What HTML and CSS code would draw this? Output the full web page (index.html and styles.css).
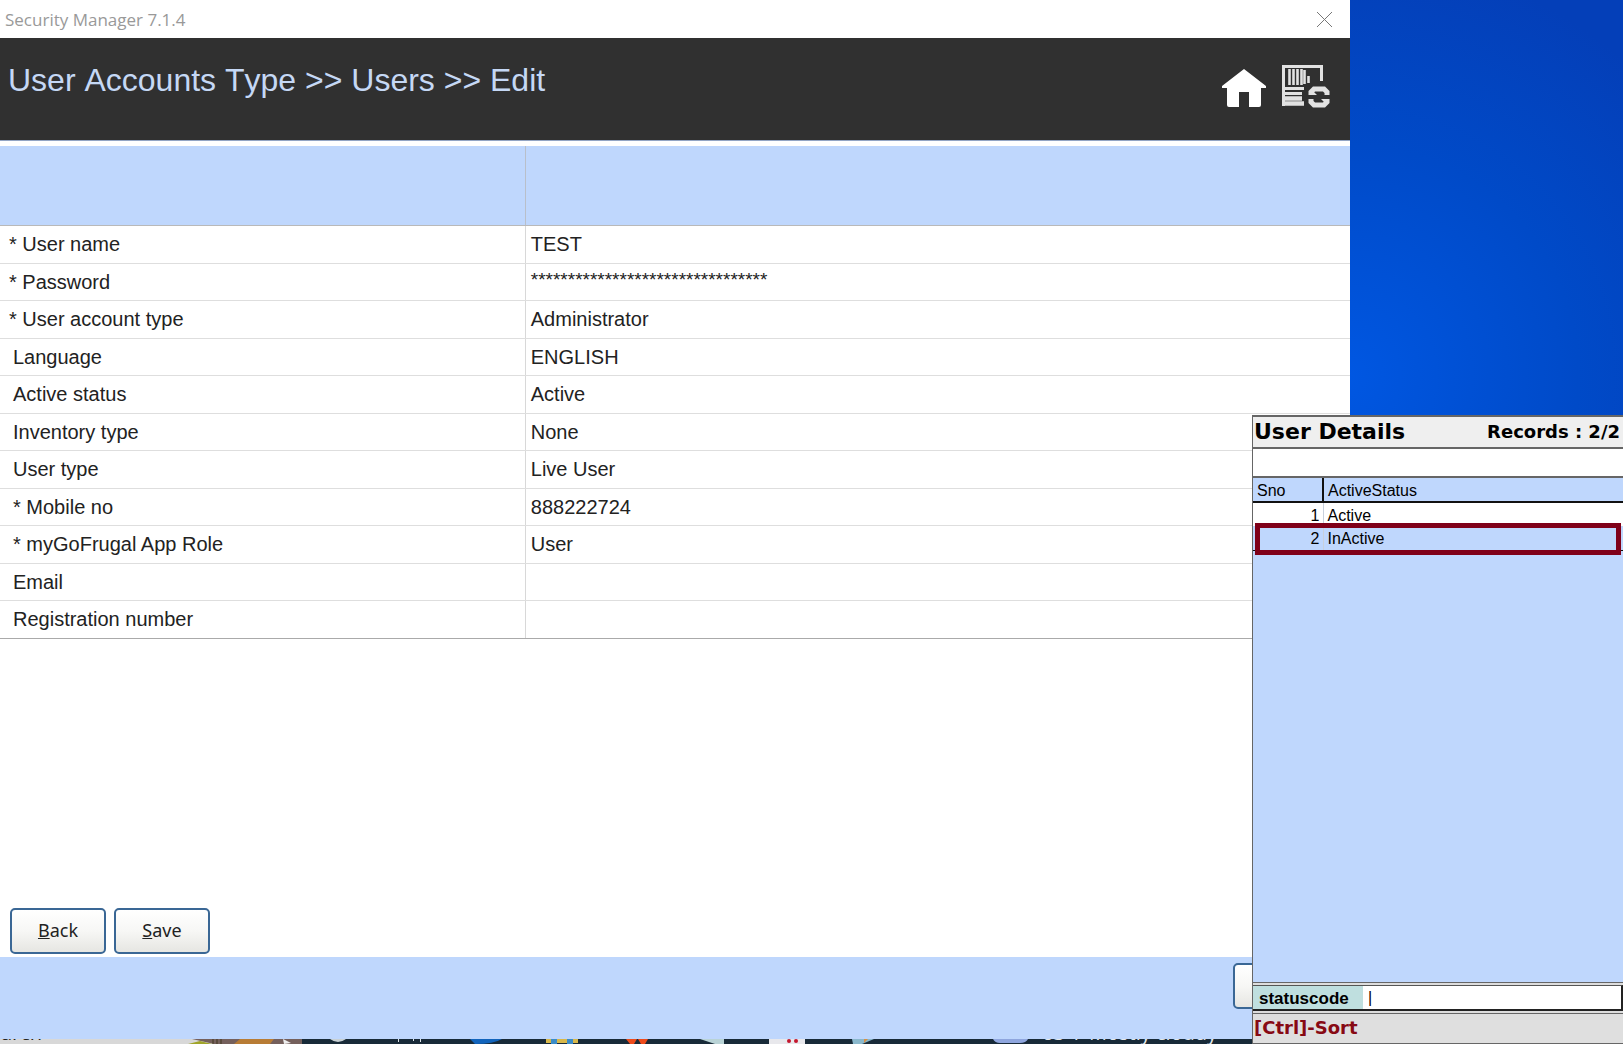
FILE: index.html
```html
<!DOCTYPE html>
<html lang="en">
<head>
<meta charset="utf-8">
<title>Security Manager 7.1.4</title>
<link rel="stylesheet" href="styles.css">
</head>
<body>
<main class="desktop">
  <section class="window">
    <div class="titlebar">
      <span>Security Manager 7.1.4</span>
      <button class="icon-button" type="button" aria-label="Close">
        <svg width="17" height="17" viewBox="0 0 17 17"><path d="M1 1 16 16M16 1 1 16" stroke="#777" fill="none"/></svg>
      </button>
    </div>
    <header class="banner">
      <h1 class="banner-title">User Accounts Type &gt;&gt; Users &gt;&gt; Edit</h1>
      <div class="banner-tools">
        <button class="icon-button" type="button" aria-label="Home">
          <svg width="46" height="44" viewBox="0 0 46 44"><path d="M23 5 45 22V24H40V41Q40 43 38 43H28V28H18V43H8Q6 43 6 41V24H1V22Z" fill="#fff"/></svg>
        </button>
        <button class="icon-button" type="button" aria-label="Refresh list">
          <svg width="48" height="43" viewBox="0 0 48 43" fill="none" stroke="#e2e2e2">
            <path d="M1.500 41V1.500H39.500V16" stroke-width="3"/>
            <path d="M7.500 4V20M11.500 4V20M15.500 4V20M19.500 4V20M22.500 5V19M26.500 11V18" stroke-width="2.600"/>
            <path d="M2 23.500H22M2 28.500H20" stroke-width="3"/>
            <path d="M2 33.500H20M2 38.500H22" stroke-width="4.600"/>
            <path d="M29 30V27L32 24H42L45 27V30M29 34V37L32 40H42L45 37V34" stroke-width="5"/>
            <path d="M27 30H35L30 25ZM47 34H39L44 39Z" fill="#e2e2e2" stroke="none"/>
          </svg>
        </button>
      </div>
    </header>
    <table class="grid">
      <thead><tr><td></td><td></td></tr></thead>
      <tbody>
        <tr><th scope="row" class="flush">* User name</th><td>TEST</td></tr>
        <tr><th scope="row" class="flush">* Password</th><td class="masked">********************************</td></tr>
        <tr><th scope="row" class="flush">* User account type</th><td>Administrator</td></tr>
        <tr><th scope="row">Language</th><td>ENGLISH</td></tr>
        <tr><th scope="row">Active status</th><td>Active</td></tr>
        <tr><th scope="row">Inventory type</th><td>None</td></tr>
        <tr><th scope="row">User type</th><td>Live User</td></tr>
        <tr><th scope="row">* Mobile no</th><td>888222724</td></tr>
        <tr><th scope="row">* myGoFrugal App Role</th><td>User</td></tr>
        <tr><th scope="row">Email</th><td></td></tr>
        <tr><th scope="row">Registration number</th><td></td></tr>
      </tbody>
    </table>
    <div class="actions">
      <button class="button" type="button"><u>B</u>ack</button>
      <button class="button" type="button"><u>S</u>ave</button>
    </div>
    <footer class="footer">
      <button class="button" type="button" aria-label="Close form"></button>
    </footer>
  </section>

  <div class="taskbar">
    <svg class="taskbar-art" width="1252" height="5" viewBox="0 0 1252 5">
      <path d="M0 0H302V5H0Z" fill="#d8d8d8"/>
      <path d="M192 0H302V5H214Z" fill="#75605c"/>
      <path d="M240 0H274L270 5H234Z" fill="#b87c35"/>
      <path d="M188 5 200 2 212 5Z" fill="#a0a428"/>
      <path d="M213 0V5M217 0V5M221 0V5" stroke="#41361f"/>
      <path d="M283 0 291 4 284 5Z" fill="#eee"/>
      <path d="M330 0Q338 6 346 0Z" fill="#c8d0d4"/>
      <path d="M398.500 0V3M413.500 0V2M420.500 0V3" stroke="#dde4e8"/>
      <path d="M470 0H502Q494 5 475 5Z" fill="#1264bc"/>
      <path d="M546 0H578V4H546Z" fill="#d9b84a"/>
      <path d="M551 0H557V5H551ZM567 0H573V5H567Z" fill="#3b8cc8"/>
      <path d="M626 0H637L634 5H630ZM638 0H648L645 5H641Z" fill="#ee4b1b"/>
      <path d="M700 0H724V5H715Z" fill="#b9d3d6"/>
      <path d="M769 0H805V5H769Z" fill="#e8e8ec"/>
      <circle cx="789" cy="2" r="2" fill="#c4162e"/><circle cx="796" cy="2" r="2" fill="#c4162e"/>
      <path d="M852 0H874L862 5H853Z" fill="#8ab8cc"/><path d="M864 0H868L864 4Z" fill="#d69045"/>
      <path d="M993 0H1028Q1026 4 1020 4H1000Q995 4 993 0Z" fill="#8fa6de"/>
    </svg>
    <span class="taskbar-search">arch</span>
    <span class="taskbar-weather">63°F Mostly cloudy</span>
  </div>

  <aside class="popup">
    <div class="popup-head">
      <h2 class="popup-title">User Details</h2>
      <span class="popup-count">Records : 2/2</span>
    </div>
    <input class="popup-filter" type="text" aria-label="Filter">
    <div class="popup-list">
      <table class="records">
        <thead><tr><th>Sno</th><th>ActiveStatus</th></tr></thead>
        <tbody>
          <tr><td>1</td><td>Active</td></tr>
          <tr class="selected"><td>2</td><td>InActive</td></tr>
        </tbody>
      </table>
      <div class="marker"></div>
    </div>
    <div class="status">
      <label class="status-label" for="status">statuscode</label>
      <input class="status-input" id="status" type="text" value="|">
    </div>
    <div class="hint">[Ctrl]-Sort</div>
  </aside>
</main>
</body>
</html>
```
FILE: styles.css
```css
* { box-sizing: border-box; }

body {
  margin: 0;
  font-family: "Liberation Sans", Arial, sans-serif;
  font-size: 20px;
  color: #222;
}

.desktop {
  position: relative;
  display: flex;
  flex-direction: column;
  min-height: 100vh;
  overflow: hidden;
  background: radial-gradient(ellipse 420px 420px at 83% 36%, #0057e2 0%, #004ac8 55%, #043fb8 100%);
}

.window {
  flex: 1;
  display: flex;
  flex-direction: column;
  width: 83.2%;
  background: #fff;
}

.icon-button {
  display: flex;
  padding: 0;
  border: 0;
  background: none;
}

.titlebar {
  display: flex;
  align-items: center;
  justify-content: space-between;
  height: 38px;
  padding: 0 17px 0 5px;
  font-family: "Open Sans", "Noto Sans", sans-serif;
  font-size: 17px;
  color: #999;
}

.banner {
  display: flex;
  justify-content: space-between;
  height: 103px;
  padding: 24px 20px 0 8px;
  border-bottom: 1px solid #93a5c4;
  background: #303030;
}

.banner-title {
  margin: 0;
  font-size: 32px;
  line-height: 36px;
  font-weight: 400;
  font-kerning: none;
  color: #c5d8f5;
}

.banner-tools {
  display: flex;
  align-items: center;
  gap: 15px;
  height: 48px;
}

.grid {
  width: 100%;
  margin-top: 5px;
  border-collapse: collapse;
  table-layout: fixed;
}

.grid thead td {
  height: 79px;
  background: #bfd7fd;
  border-bottom: 1px solid #b9b9b9;
}

.grid tr > :first-child {
  width: 38.9%;
  border-right: 1px solid #d8d8d8;
}

.grid thead tr > :first-child { border-right-color: #b9bfca; }

.grid tbody tr { height: 38px; }
.grid tbody tr:nth-child(even) { height: 37px; }

.grid tbody th,
.grid tbody td {
  padding: 0 5px;
  border-bottom: 1px solid #dedede;
  line-height: 24px;
  font-weight: 400;
  text-align: left;
}

.grid tbody th { padding-left: 13px; }
.grid tbody .flush { padding-left: 9px; }
.grid tbody .masked { padding-bottom: 4px; font-size: 19px; }
.grid tbody tr:last-child > * { border-bottom-color: #aaa; }

.actions {
  display: flex;
  gap: 8px;
  margin-top: auto;
  padding: 0 10px 3px;
}

.button {
  width: 96px;
  height: 46px;
  padding: 0 0 2px;
  border: 2px solid #3a6795;
  border-radius: 5px;
  background: linear-gradient(#fff, #f7f7f5 50%, #e6e6e2);
  font-family: "Noto Sans", sans-serif;
  font-size: 18px;
  color: #222;
}

.footer {
  display: flex;
  justify-content: flex-end;
  height: 82px;
  padding: 6px 21px 0;
  background: #bfd7fd;
}

.taskbar {
  position: relative;
  height: 5px;
  overflow: hidden;
  background: #182a38;
}

.taskbar-art { display: block; }

.taskbar-search,
.taskbar-weather {
  position: absolute;
  bottom: -3px;
  left: 1px;
  font-family: "Open Sans", sans-serif;
  font-size: 20px;
  line-height: 28px;
}

.taskbar-weather {
  left: 1042px;
  color: #e4e8ea;
}

.popup {
  position: absolute;
  right: 0;
  bottom: 0;
  display: flex;
  flex-direction: column;
  width: 371px;
  height: 629px;
  border: 1px solid #666;
  border-right: 0;
  border-top-width: 2px;
  background: #ddd;
  color: #000;
}

.popup-head {
  display: flex;
  align-items: center;
  justify-content: space-between;
  height: 30px;
  padding: 0 3px 0 1px;
  background: #efefef;
  font-family: "DejaVu Sans", Verdana, sans-serif;
}

.popup-title {
  margin: 0;
  font-size: 22px;
  line-height: 26px;
}

.popup-count {
  font-size: 18px;
  line-height: 24px;
  font-weight: 700;
}

.popup-filter {
  height: 31px;
  border: 2px solid #666;
  border-width: 2px 0;
  background: #fff;
}

.popup-list {
  position: relative;
  flex: 1;
  border-bottom: 1px solid #666;
  background: #bfd7fd;
}

.records {
  width: 100%;
  border-collapse: collapse;
  table-layout: fixed;
  font-size: 16px;
  line-height: 22px;
}

.records th,
.records td {
  height: 24px;
  padding: 2px 4px 0;
  font-weight: 400;
  line-height: 20px;
  text-align: left;
}

.records th {
  border-bottom: 2px solid #111;
}

.records th:first-child {
  width: 70px;
  border-right: 2px solid #111;
}

.records td:first-child {
  padding-right: 3px;
  border-right: 1px solid #c8d0dc;
  text-align: right;
}

.records tbody tr { background: #fff; }
.records .selected { background: #bfd7fd; border-bottom: 1px solid #111; }

/* outline over the chosen record */
.marker {
  position: absolute;
  top: 45px;
  right: 2px;
  left: 2px;
  height: 32px;
  border: 5px solid #7f0019;
}

.status {
  display: flex;
  height: 26px;
  margin-top: 2px;
  border: 1px solid #555;
  border-width: 1px 2px 2px 0;
  border-bottom-color: #222;
  border-right-color: #222;
}

.status-label {
  width: 110px;
  padding-left: 6px;
  background: #bfdfdf;
  font-size: 17px;
  line-height: 25px;
  font-weight: 700;
}

.status-input {
  flex: 1;
  min-width: 0;
  padding: 0 5px;
  border: 0;
  background: #fff;
  font-family: "Liberation Sans", sans-serif;
  font-size: 16px;
}

.hint {
  height: 30px;
  margin-top: 2px;
  padding-left: 1px;
  border-top: 1px solid #666;
  background: #dfdfdf;
  font-family: "DejaVu Sans", Verdana, sans-serif;
  font-size: 18px;
  line-height: 28px;
  font-weight: 700;
  color: #870a14;
}
```
